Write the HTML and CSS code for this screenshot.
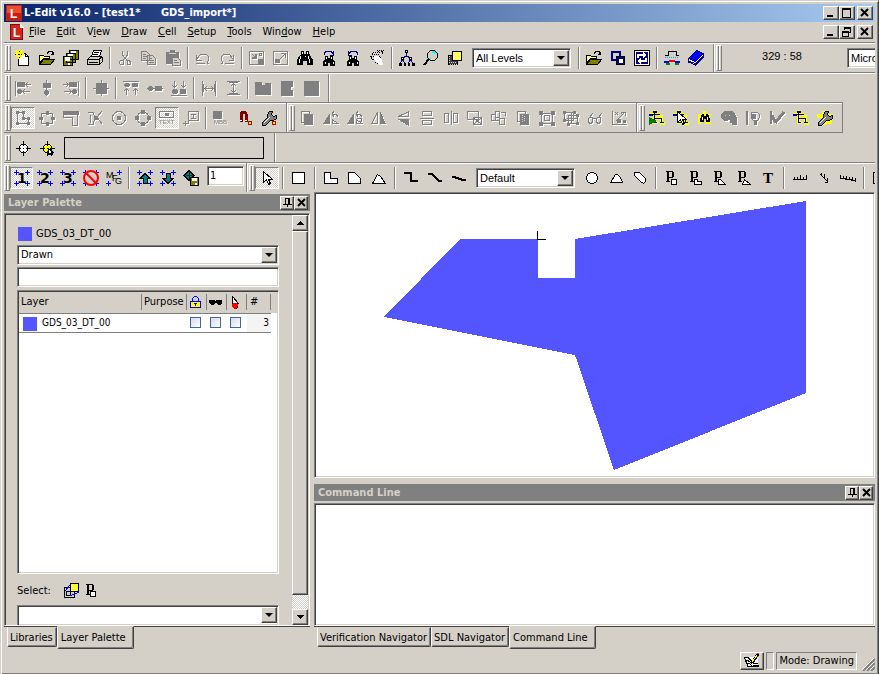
FILE: index.html
```html
<!DOCTYPE html>
<html lang="en">
<head>
    <meta charset="UTF-8">
    <meta name="viewport" content="width=device-width, initial-scale=1.0">
    <title>L-Edit v16.0</title>
    <link rel="stylesheet" href="styles.css">
</head>
<body>
    <!-- shapes used by more than one icon -->
    <svg class="sprite" aria-hidden="true">
        <symbol id="plus4" viewBox="0 0 16 16"><path stroke="#00f" d="M0 2.500h5M2.500 0v5M11 2.500h5M13.500 0v5M0 13.500h5M2.500 11v5M11 13.500h5M13.500 11v5"/></symbol>
        <symbol id="tree" viewBox="0 0 16 16"><path stroke="#ff0" stroke-width="3" d="M0 4.500h11M5.500 0v14M5 8.500h9M12.500 5v9M5 12.500h4M11 13.500h5"/><path stroke="#000080" stroke-width="2" d="M0 5h4M4 2h4"/><path stroke="#000080" d="M2 4.500h9M5.500 1v12M6 8.500h7M12.500 8v5M11 12.500h4M5 12.500h3"/></symbol>
        <symbol id="bino" viewBox="0 0 16 16"><path fill="#000" stroke="none" d="M4 1h3v3h2V1h3v3l1 1 3 5v5h-6v-4H6v4H0v-5l3-5 1-1z"/><path stroke="#fff" d="M5.500 2v2M10.500 2v2M3.500 6v3M2.500 9v4M11.500 6v3M12.500 9v4M8 6.500h1"/></symbol>
        <symbol id="minibino" viewBox="0 0 16 16"><path fill="#000" stroke="none" d="M4 6h3v2h2V6h3v3l2 3v4H9v-3H7v3H2v-4l2-3z"/><path stroke="#fff" d="M5.500 7v2M10.500 7v2M4.500 12v2M12.500 12v2"/></symbol>
        <symbol id="port" viewBox="0 0 16 16"><path d="M2 1.500h7M3.500 1v10M4.500 1v10M2 11.500h4M5 7.500h4M9.500 2v5M8.500 2v5"/></symbol>
        <symbol id="wrench" viewBox="0 0 16 16"><path stroke="#000" fill="#808080" d="M8.500 1.500h3l-1 3 2 2 3-1v3l-3 2h-3l-5 5h-3v-3l5-5v-3z"/><path stroke="#fff" d="M3 13l6-6"/></symbol>
        <symbol id="pointer" viewBox="0 0 16 16"><path fill="#fff" stroke="#000" d="M4.500 1.500v11l3-3 2 5 2-1-2-4h4z"/></symbol>
        <symbol id="target" viewBox="0 0 16 16"><path d="M8.500 1v5M8.500 11v5M1 8.500h5M11 8.500h5"/><path d="M6.500 4.500h4l2 2v4l-2 2h-4l-2-2v-4z"/><path d="M8 8.500h1"/></symbol>
        <symbol id="floppy" viewBox="0 0 16 16"><path fill="#808000" stroke="#000" d="M7.500 7.500h8v8h-8z"/><path fill="#fff" stroke="none" d="M9 8h5v3H9zM12 13h2v2h-2z"/></symbol>
        <symbol id="folder" viewBox="0 0 16 16"><path stroke="#000" fill="#ff8" d="M.5 13.500v-8h4l1 1h5v2h-6z"/><path stroke="#000" fill="#808000" d="M.5 14.500l4-5h11l-4 5z"/><path stroke="#000" d="M8 3.500l2-2h3l1 2M12 4.500h3M14.500 2v2"/></symbol>
    </svg>

    <div class="window">
        <header class="titlebar">
            <svg class="logo" viewBox="0 0 16 16"><rect width="16" height="16" fill="#c81e14" stroke="none"/><rect x="1" y="1" width="14" height="7" fill="#e85030" stroke="none"/><text x="4" y="13" class="logo-letter">L</text></svg>
            <h1>L-Edit v16.0 - [test1* &nbsp; &nbsp;  GDS_import*]</h1>
            <div class="caption-buttons">
                <button class="cap" aria-label="Minimize"><svg viewBox="0 0 12 10"><path stroke-width="2" d="M2 8h6"/></svg></button>
                <button class="cap" aria-label="Maximize"><svg viewBox="0 0 12 10"><path d="M1.500 1v8.500h8V.5M1 1h9"/><path d="M1 .5h9"/></svg></button>
                <button class="cap close" aria-label="Close"><svg viewBox="0 0 12 10"><path class="smooth" d="M2 1l7 7M9 1L2 8"/></svg></button>
            </div>
        </header>

        <nav class="menubar">
            <svg class="doc-logo" viewBox="0 0 14 16"><path fill="#d8231c" stroke="#701010" d="M.5.5h9l3 3v12H.5z"/><path fill="#fff" stroke="none" d="M10 0v4h4z"/><text x="3" y="13" class="logo-letter">L</text></svg>
            <a href="#"><u>F</u>ile</a>
            <a href="#"><u>E</u>dit</a>
            <a href="#">V<u>i</u>ew</a>
            <a href="#"><u>D</u>raw</a>
            <a href="#"><u>C</u>ell</a>
            <a href="#"><u>S</u>etup</a>
            <a href="#"><u>T</u>ools</a>
            <a href="#">Win<u>d</u>ow</a>
            <a href="#"><u>H</u>elp</a>
            <div class="caption-buttons">
                <button class="cap" aria-label="Minimize document"><svg viewBox="0 0 12 10"><path stroke-width="2" d="M2 8h6"/></svg></button>
                <button class="cap" aria-label="Restore document"><svg viewBox="0 0 12 10"><path d="M3.500 3V.5h6v5H8M3 1.500h7M1.500 4.500h6v5h-6zM1 5.500h7"/></svg></button>
                <button class="cap close" aria-label="Close document"><svg viewBox="0 0 12 10"><path class="smooth" d="M2 1l7 7M9 1L2 8"/></svg></button>
            </div>
        </nav>

        <!-- standard -->
        <div class="row row-standard">
            <div class="band">
                <button class="tool" aria-label="New"><svg viewBox="0 0 16 16"><path fill="#fff" stroke="#000" d="M3.500 3.500h7l3 3v9h-10z"/><path d="M10.500 3v3.500h3"/><path stroke="#ff0" stroke-width="2" d="M4 0v9M0 4h9M1 1l6 6M7 1L1 7"/><path stroke="#000" stroke-dasharray="1 2" d="M4.500 1v8M0 4.500h8"/></svg></button>
                <button class="tool" aria-label="Open"><svg viewBox="0 0 16 16"><use href="#folder"/></svg></button>
                <button class="tool" aria-label="Save all"><svg viewBox="0 0 16 16"><path fill="#808000" stroke="#000" d="M6.500.5h9v9h-9zM3.500 3.500h9v9h-9zM.5 6.500h9v9h-9z"/><path fill="#fff" stroke="none" d="M8 1h5v2H8zM5 4h5v2H5zM2 7h5v4H2zM5 13h2v2H5z"/></svg></button>
                <button class="tool" aria-label="Print"><svg viewBox="0 0 16 16"><path fill="#fff" stroke="#000" d="M4.500 6.500l2-6h8l-2 6z"/><path fill="#d4d0c8" stroke="#000" d="M.5 9.500l3-3h11l1 1v4l-3 3h-12z"/><path d="M0 9.500h12l3-3M12.500 9v6M2 12.500h9M7 2.500h5M6 4.500h5"/><path stroke="#e0e000" d="M9 11.500h2"/></svg></button>
                <i class="sep"></i>
                <button class="tool off" aria-label="Cut"><svg viewBox="0 0 16 16"><path d="M5.500 1v4l5 6M10.500 1v4l-5 6M4 10.500h2v4H3.500l-1-1v-2zM10 10.500h2l1 1v3h-3z"/></svg></button>
                <button class="tool off" aria-label="Copy"><svg viewBox="0 0 16 16"><path d="M.5 1.500h5l3 3v6h-8zM6.500 5.500h5l3 3v6h-8z" fill="#d4d0c8"/><path d="M2 4.500h3M2 6.500h4M2 8.500h3M8 8.500h3M8 10.500h5M8 12.500h5"/></svg></button>
                <button class="tool off" aria-label="Paste"><svg viewBox="0 0 16 16"><path class="f" d="M1 2h4V0h5v2h4v12H1z"/><path fill="#d4d0c8" d="M7.500 7.500h5l3 3v5h-8z"/><path stroke="#d4d0c8" d="M4 3.500h7"/><path d="M9 10.500h3M9 12.500h5"/></svg></button>
                <i class="sep"></i>
                <button class="tool off" aria-label="Undo"><svg viewBox="0 0 16 16"><path d="M1.500 5v5h5M2 9l3-4 2-1h4l2 2 1 3-2 4M1 13.500h9M12 13.500h2"/></svg></button>
                <button class="tool off" aria-label="Redo"><svg viewBox="0 0 16 16"><path d="M14.500 5v5h-5M14 9l-3-4-2-1H5L3 6 2 9l2 4M6 13.500h9M2 13.500h2"/></svg></button>
                <i class="sep"></i>
                <button class="tool off" aria-label="Push into cell"><svg viewBox="0 0 16 16"><path d="M.5 1.500h14v13H.5zM3 4l4 4M10.500 3.500h2v2h-2z"/><path class="f" d="M8 4v5H3v-2h2l1-1V4zM9 9h5v5H9z"/></svg></button>
                <button class="tool off" aria-label="Pop out of cell"><svg viewBox="0 0 16 16"><path d="M.5 1.500h14v13H.5zM7 9l5-5M8 3.500h4.500V8"/><path class="f" d="M2 9h5v4H2z"/></svg></button>
                <button class="tool" aria-label="Find"><svg viewBox="0 0 16 16"><use href="#bino"/></svg></button>
                <button class="tool" aria-label="Find next"><svg viewBox="0 0 16 16"><use href="#minibino"/><path stroke="#000080" d="M3.500 5V3l2-2h4l3 3M12.500 1v4H9"/></svg></button>
                <button class="tool" aria-label="Find previous"><svg viewBox="0 0 16 16"><use href="#minibino"/><path stroke="#000080" d="M12.500 5V3l-2-2h-4l-3 3M3.500 1v4H7"/></svg></button>
                <button class="tool" aria-label="Go to"><svg viewBox="0 0 16 16"><path stroke="#000" stroke-dasharray="1 1" d="M1.500 5.500l3-3h4l2 4 3 5M1 6l5 6 3 2M3 4.500h5M2 6.500h5"/><path fill="#fff" stroke="none" d="M5 6h4l4 4 1 5h-3L5 10z"/><path d="M8 0l3 3M11 0L8 3M12 0l1 2 2-2M13.500 2v2"/></svg></button>
                <i class="sep"></i>
                <button class="tool" aria-label="Hierarchy"><svg viewBox="0 0 16 16"><path stroke="#000080" d="M7.500 3v3l-4 2v3M7.500 6l4 2v3M3 10l-2 4M4 10l2 4M11 10l-2 4M12 10l2 4"/><path fill="#fff" stroke="#000" d="M6.500.5h2v2h-2zM2.500 7.500h2v2h-2zM10.500 7.500h2v2h-2z"/><path class="f" d="M0 13h3v3H0zM5 13h2v3H5zM9 13h2v3H9zM13 13h3v3h-3z"/></svg></button>
                <button class="tool" aria-label="Zoom"><svg viewBox="0 0 16 16"><path fill="#d4d0c8" stroke="#000" d="M7.500.5h4l3 3v4l-3 3h-4l-3-3v-4z"/><path stroke="#0ff" stroke-width="2" d="M9 2h2l2 2M7 9h1"/><path stroke="#000" stroke-width="2" d="M6 9l-5 6"/></svg></button>
                <button class="tool" aria-label="Layers"><svg viewBox="0 0 16 16"><path fill="#404040" stroke="#000" d="M1.500 5.500h9v9h-9z"/><path stroke="#d4d0c8" stroke-dasharray="1 1" d="M2 12.500h8M3 14.500h8M2.500 6v8"/><path fill="#ff6" stroke="#000" d="M5.500 1.500h9v9h-9z"/></svg></button>
                <span class="combo combo-tool"><select aria-label="Hierarchy levels"><option>All Levels</option></select></span>
                <i class="sep"></i>
                <button class="tool" aria-label="Open design"><svg viewBox="0 0 16 16"><use href="#folder"/></svg></button>
                <button class="tool" aria-label="Copy cell"><svg viewBox="0 0 16 16"><path fill="#d4d0c8" stroke="#000080" stroke-width="2" d="M2 2h8v8H2z"/><path fill="#000080" stroke="#000" d="M6.500 6.500h8v8h-8z"/><path fill="#fff" stroke="none" d="M9 9h4v4H9z"/></svg></button>
                <button class="tool" aria-label="Refresh"><svg viewBox="0 0 16 16"><path fill="#fff" stroke="#000" d="M.5.5h15v15H.5z"/><path fill="#000080" stroke="none" d="M2 2h12v12H2z"/><path stroke="#fff" stroke-width="2" d="M4 8V5h6M12 8v3H6"/><path fill="#fff" stroke="none" d="M9 2l4 3-4 3zM7 8v6l-4-3z"/></svg></button>
                <i class="sep"></i>
                <button class="tool" aria-label="Cross section"><svg viewBox="0 0 16 16"><path stroke="#000" d="M1 5.500h3v-4h8v4h3"/><path stroke="#0af" stroke-dasharray="1 1" d="M1 7.500h14"/><path stroke="#00f" stroke-width="2" d="M0 12h5M11 12h5"/><path stroke="#f00" stroke-width="2" d="M5 11h6"/><path stroke="#080" stroke-width="2" d="M2 14h4M11 14h4"/></svg></button>
                <button class="tool" aria-label="Help"><svg viewBox="0 0 16 16"><path fill="#fff" stroke="#000080" d="M.5 9v3l7 3 8-8V4.500z"/><path fill="#00f" stroke="#000080" d="M.5 8.500l8-8 7 3-8 8z"/><path stroke="#000080" d="M1 11.500l7 2 7-7"/></svg></button>
            </div>
            <div class="band band-open">
                <output class="coords">329 : 58</output>
                <span class="combo combo-units"><select aria-label="Units"><option>Microns</option></select></span>
            </div>
        </div>

        <!-- alignment -->
        <div class="row row-align">
            <div class="band">
                <button class="tool off" aria-label="Align left"><svg viewBox="0 0 16 16"><path d="M.5 1v15M11 4.500h5M8 11.500h7M13 2l-2 2.500 2 2.500M10 9l-2 2.500 2 2.500"/><path class="f" d="M2 2h8v5H2zM3 9h3v5H3zM2 10h5v3H2z"/></svg></button>
                <button class="tool off" aria-label="Align center"><svg viewBox="0 0 16 16"><path d="M7.500 0v16"/><path class="f" d="M4 3h8v5H4zM6 10h3v5H6zM5 11h5v3H5z"/></svg></button>
                <button class="tool off" aria-label="Align right"><svg viewBox="0 0 16 16"><path d="M15.500 1v15M0 4.500h5M1 11.500h7M3 2l2 2.500L3 7M6 9l2 2.500L6 14"/><path class="f" d="M6 2h8v5H6zM10 9h3v5h-3zM9 10h5v3H9z"/></svg></button>
                <i class="sep"></i>
                <button class="tool off" aria-label="Center both"><svg viewBox="0 0 16 16"><path d="M8.500 0v16M0 8.500h16"/><path class="f" d="M3 3h11v11H3z"/></svg></button>
                <i class="sep"></i>
                <button class="tool off" aria-label="Align top"><svg viewBox="0 0 16 16"><path d="M0 1.500h16M3.500 9v6M12.500 9v6M1 11l2.500-2L6 11M10 11l2.500-2 2.500 2"/><path class="f" d="M2 3h4v4H2zM1 4h6v2H1zM9 3h6v4H9z"/></svg></button>
                <button class="tool off" aria-label="Align middle"><svg viewBox="0 0 16 16"><path d="M0 8.500h16"/><path class="f" d="M2 6h3v5H2zM1 7h5v3H1zM8 6h7v5H8z"/></svg></button>
                <button class="tool off" aria-label="Align bottom"><svg viewBox="0 0 16 16"><path d="M0 15.500h16M3.500 1v6M12.500 1v6M1 5l2.500 2L6 5M10 5l2.500 2L15 5"/><path class="f" d="M2 9h4v5H2zM1 10h6v3H1zM9 9h6v5H9z"/></svg></button>
                <i class="sep"></i>
                <button class="tool off" aria-label="Space horizontally"><svg viewBox="0 0 16 16"><path d="M1.500 1v15M14.500 1v15M4 8.500h9M6 6L4 8.500 6 11M10 6l2 2.500-2 2.500"/><path class="f" d="M1 4h2v8H1zM13 4h2v8h-2z"/></svg></button>
                <button class="tool off" aria-label="Space vertically"><svg viewBox="0 0 16 16"><path d="M2 1.500h13M2 14.500h13M8.500 4v8M6 6l2.500-2L11 6M6 10l2.500 2 2.500-2"/><path class="f" d="M4 1h9v2H4zM4 13h9v2H4z"/></svg></button>
                <i class="sep"></i>
                <button class="tool off" aria-label="Merge"><svg viewBox="0 0 16 16"><path class="f" d="M0 2h7v3h3V3h6v12H0z"/></svg></button>
                <button class="tool off" aria-label="Notch"><svg viewBox="0 0 16 16"><path class="f" d="M2 1h12v6h-2v3h2v6H2z"/></svg></button>
                <button class="tool off" aria-label="Fill"><svg viewBox="0 0 16 16"><path class="f" d="M1 1h15v15H1z"/></svg></button>
            </div>
        </div>

        <!-- snapping, editing, tracing -->
        <div class="row row-edit">
            <div class="band">
                <button class="tool off pressed" aria-label="Snap to vertex"><svg viewBox="0 0 16 16"><path d="M2.500 2.500v11h11v-5h-5v-6z"/><path class="f" d="M1 1h3v3H1zM7 1h3v3H7zM1 12h3v3H1zM12 12h3v3h-3zM12 7h3v3h-3zM7 7h3v3H7z"/></svg></button>
                <button class="tool off" aria-label="Snap to edge"><svg viewBox="0 0 16 16"><path d="M2.500 3.500h11v10h-11z"/><path class="f" d="M7 1h3v4H7zM7 12h3v4H7zM0 7h4v3H0zM12 7h4v3h-4z"/></svg></button>
                <button class="tool off" aria-label="Snap to corner"><svg viewBox="0 0 16 16"><path class="f" d="M0 1h16v4H0z"/><path d="M.5 1v6h9v8.500h5V1"/></svg></button>
                <button class="tool off" aria-label="Snap to intersection"><svg viewBox="0 0 16 16"><path d="M1 2.500h5l2 5-2 7H1M15 1l-5 6 5 7M3 5v8"/><path class="f" d="M7 6h4v4H7z"/></svg></button>
                <button class="tool off" aria-label="Snap to center"><svg viewBox="0 0 16 16"><circle cx="8" cy="8" r="6.500"/><path class="f" d="M6 6h4v4H6z"/></svg></button>
                <button class="tool off" aria-label="Snap to quadrant"><svg viewBox="0 0 16 16"><circle cx="8" cy="8" r="6"/><path class="f" d="M6 0h4v4H6zM6 12h4v4H6zM0 6h4v4H0zM12 6h4v4h-4z"/></svg></button>
                <button class="tool off pressed" aria-label="Snap to text"><svg viewBox="0 0 16 16"><path d="M.5 1.500h14v6H.5z"/><path class="f" d="M6 3h4v3H6z"/><text x="0" y="14" class="tiny">TEXT</text></svg></button>
                <button class="tool off" aria-label="Snap to instance"><svg viewBox="0 0 16 16"><path d="M5.500 1.500h10v9h-10zM8 4.500h5M10.500 4v5M8 8.500h5M0 13.500h6M2.500 11v5M5 8v6"/></svg></button>
                <i class="sep"></i>
                <button class="tool off" aria-label="Bounding box"><svg viewBox="0 0 16 16"><path class="f" d="M0 1h9v8H0z"/><text x="1" y="14" class="tiny">MBB</text></svg></button>
                <button class="tool" aria-label="Magnet"><svg viewBox="0 0 16 16"><path stroke="#800000" stroke-width="3" d="M4 12V4l2-2h2l1 2v8"/><path stroke="#fff" d="M3 10.500h2M8 10.500h2"/><circle fill="#ff0" stroke="#c00000" cx="13" cy="13" r="2"/></svg></button>
                <button class="tool" aria-label="Snap setup"><svg viewBox="0 0 16 16"><use href="#wrench"/><circle fill="#ff0" stroke="#c00000" cx="13" cy="13" r="2"/></svg></button>
            </div>
            <div class="band">
                <button class="tool off" aria-label="Duplicate"><svg viewBox="0 0 16 16"><path d="M2.500 1.500h8v11h-8z"/><path class="f" d="M5 4h9v11H5z"/></svg></button>
                <button class="tool off" aria-label="Rotate"><svg viewBox="0 0 16 16"><path class="f" d="M7 3v11H0z"/><path d="M9 13.500h6l-6-4zM9 4h4l2 3M11 1L9 4l2 3"/></svg></button>
                <button class="tool off" aria-label="Rotate by angle"><svg viewBox="0 0 16 16"><path class="f" d="M7 3v11H0z"/><path d="M9 13.500h6l-6-4zM9 4h4l2 3M11 1L9 4l2 3M10 8.500h4v3h-3"/></svg></button>
                <button class="tool off" aria-label="Flip horizontal"><svg viewBox="0 0 16 16"><path d="M6.500 2v11.500H1z"/><path class="f" d="M9 1v13h6z"/></svg></button>
                <button class="tool off" aria-label="Flip vertical"><svg viewBox="0 0 16 16"><path d="M13.500 2v4.500H3z"/><path class="f" d="M14 9v7L2 9z"/></svg></button>
                <button class="tool off" aria-label="Slice horizontal"><svg viewBox="0 0 16 16"><path d="M3.500 1.500h9v4h-9zM3.500 10.500h9v4h-9zM1 8.500h14"/></svg></button>
                <button class="tool off" aria-label="Slice vertical"><svg viewBox="0 0 16 16"><path d="M1.500 3.500h4v9h-4zM10.500 3.500h4v9h-4zM8.500 1v14"/></svg></button>
                <button class="tool off" aria-label="Subtract"><svg viewBox="0 0 16 16"><path d="M.5 1.500h11v8H.5zM6.500 7.500h8v7h-8zM7 8l7 6M14 8l-7 6"/></svg></button>
                <button class="tool off" aria-label="Nibble"><svg viewBox="0 0 16 16"><path d="M.5 4.500h4v6h-4zM4.500 1.500h4v6h-4zM8.500 8.500h5v6h-5zM10 2h4v4M5 10h3"/></svg></button>
                <button class="tool off" aria-label="Intersect"><svg viewBox="0 0 16 16"><path d="M2.500 1.500h8v10h-8z"/><path class="f" d="M5 4h9v11H5z"/><path stroke="#d4d0c8" stroke-dasharray="1 1" d="M7.500 5v7M9.500 6v6"/></svg></button>
                <button class="tool off" aria-label="Group"><svg viewBox="0 0 16 16"><path d="M2.500 3.500h11v10h-11zM5.500 5.500h5v5h-5z"/><path class="f" d="M0 1h4v4H0zM12 1h4v4h-4zM0 12h4v4H0zM12 12h4v4h-4z"/></svg></button>
                <button class="tool off" aria-label="Ungroup"><svg viewBox="0 0 16 16"><path d="M1.500 2.500h9v8h-9zM5.500 5.500h9v8h-9zM8.500 3v10M4 8.500h10"/><path class="f" d="M0 1h3v3H0zM10 1h3v3h-3zM0 9h3v3H0zM4 13h3v3H4zM13 12h3v3h-3zM13 4h3v3h-3z"/></svg></button>
                <button class="tool off" aria-label="View only"><svg viewBox="0 0 16 16"><path d="M1.500 8.500l1-1h3v4l-1 2h-2l-1-2zM9.500 8.500l1-1h3v4l-1 2h-2l-1-2zM6 8.500h3M3 7l3-4M12 7l3-4"/></svg></button>
                <button class="tool off" aria-label="Measure"><svg viewBox="0 0 16 16"><path d="M1.500 1v13.500H16M5 11l8-8M4 2l3 3M7 2L4 5M10 4V2.500h4V6"/><path class="f" d="M6 9h4v4H6zM12 10h3v3h-3z"/></svg></button>
            </div>
            <div class="band">
                <button class="tool" aria-label="Run trace"><svg viewBox="0 0 16 16"><use href="#tree"/><path fill="#008000" stroke="none" d="M0 7l8 4-8 4z"/></svg></button>
                <button class="tool" aria-label="Pick node"><svg viewBox="0 0 16 16"><use href="#tree"/><use href="#pointer"/></svg></button>
                <button class="tool" aria-label="Find node"><svg viewBox="0 0 16 16"><path stroke="#ff0" stroke-width="3" d="M1 5.500h13M7.500 1v4M2.500 6v8M14 12H8"/><path fill="#000" stroke="none" d="M5 4h2v2h2V4h2l2 5v3H9V9H7v3H3V9z"/><path stroke="#fff" d="M5.500 7v3M10.500 7v3"/></svg></button>
                <button class="tool off" aria-label="Mark node"><svg viewBox="0 0 16 16"><path class="f" d="M3 1h8l3 3 2 4v7h-5v-2H9v-3H7v1H3L0 8V4z"/><path stroke="#d4d0c8" d="M4 5.500h1M8 5.500h1"/></svg></button>
                <button class="tool off" aria-label="Highlight node"><svg viewBox="0 0 16 16"><path stroke-width="2" d="M2 1v14"/><path d="M6.500 2.500h6l2 2v3l-2 3h-4l-2-2z"/><path class="f" d="M6 4h5v5H6zM9 10h3v5H9z"/></svg></button>
                <button class="tool off" aria-label="Erase marks"><svg viewBox="0 0 16 16"><path stroke-width="2" d="M2 1v13"/><path stroke-width="3" d="M3 5l3 7M6 13l9-11"/></svg></button>
                <button class="tool" aria-label="Show connections"><svg viewBox="0 0 16 16"><use href="#tree"/></svg></button>
                <button class="tool" aria-label="Trace setup"><svg viewBox="0 0 16 16"><path stroke="#ff0" stroke-width="4" d="M0 6h16M7 1v14M4 12h11"/><use href="#wrench"/></svg></button>
            </div>
        </div>

        <!-- base point -->
        <div class="row row-base">
            <div class="band">
                <button class="tool" aria-label="Base point"><svg viewBox="0 0 16 16"><path fill="#fff" stroke="none" d="M6 4h5l2 2v5l-2 2H6l-2-2V6z"/><use href="#target"/></svg></button>
                <button class="tool" aria-label="Pick base point"><svg viewBox="0 0 16 16"><path fill="#ff0" stroke="none" d="M6 4h5l2 2v5l-2 2H6l-2-2V6z"/><use href="#target"/><path fill="#fff" stroke="#000" d="M9.500 8.500v6l2-1 1 2 1-1-1-2h2z"/></svg></button>
                <input class="base-input" type="text" aria-label="Base point value">
            </div>
        </div>

        <!-- grids and drawing -->
        <div class="row row-draw">
            <div class="band narrow">
                <button class="tool pressed" aria-label="Grid 1"><svg viewBox="0 0 16 16"><use href="#plus4"/><text x="3" y="13" class="digit">1</text></svg></button>
                <button class="tool" aria-label="Grid 2"><svg viewBox="0 0 16 16"><use href="#plus4"/><text x="3" y="13" class="digit">2</text></svg></button>
                <button class="tool" aria-label="Grid 3"><svg viewBox="0 0 16 16"><use href="#plus4"/><text x="3" y="13" class="digit">3</text></svg></button>
                <button class="tool" aria-label="No grid"><svg viewBox="0 0 16 16"><use href="#plus4"/><g class="smooth"><circle cx="8" cy="8" r="7" stroke="#f00" stroke-width="2"/><path stroke="#f00" stroke-width="2" d="M3 3l10 10"/></g></svg></button>
                <button class="tool" aria-label="Manufacturing grid"><svg viewBox="0 0 16 16"><path stroke="#00f" d="M11 2.500h5M13.500 0v5M0 13.500h5M2.500 11v5"/><text x="0" y="8" class="mfg">M</text><text x="6" y="11" class="mfg">F</text><text x="9" y="14" class="mfg">G</text></svg></button>
                <i class="sep wide"></i>
                <button class="tool" aria-label="Grid up"><svg viewBox="0 0 16 16"><use href="#plus4"/><path fill="#008080" stroke="#000" d="M8 3.500l5 5h-3v5H6v-5H3z"/></svg></button>
                <button class="tool" aria-label="Grid down"><svg viewBox="0 0 16 16"><use href="#plus4"/><path fill="#008080" stroke="#000" d="M8 13.500l5-5h-3v-5H6v5H3z"/></svg></button>
                <button class="tool" aria-label="Save grid"><svg viewBox="0 0 16 16"><path fill="#008080" stroke="#000" d="M6 .5l5 5-5 5-5-5z"/><path stroke="#0a3030" d="M6.500 2v7M3 5.500h7"/><use href="#floppy"/></svg></button>
                <input class="grid-input" type="text" value="1" aria-label="Grid multiple">
            </div>
            <div class="band band-open">
                <button class="tool pressed" aria-label="Select"><svg viewBox="0 0 16 16"><use href="#pointer"/></svg></button>
                <i class="sep wide"></i>
                <button class="tool" aria-label="Box"><svg viewBox="0 0 16 16"><path fill="#fff" d="M1.500 2.500h12v11h-12z"/></svg></button>
                <i class="sep wide"></i>
                <button class="tool" aria-label="90 degree polygon"><svg viewBox="0 0 16 16"><path fill="#fff" d="M1.500 2.500h6v6h7v5h-13z"/></svg></button>
                <button class="tool" aria-label="45 degree polygon"><svg viewBox="0 0 16 16"><path fill="#fff" d="M1.500 2.500h6l6 6v5h-12z"/></svg></button>
                <button class="tool" aria-label="Polygon"><svg viewBox="0 0 16 16"><path fill="#fff" d="M1.500 13.500l5-9 3 2 5 7z"/></svg></button>
                <i class="sep wide"></i>
                <button class="tool" aria-label="90 degree wire"><svg viewBox="0 0 16 16"><path stroke-width="2" d="M1 3h7v8h7"/></svg></button>
                <button class="tool" aria-label="45 degree wire"><svg viewBox="0 0 16 16"><path stroke-width="2" d="M1 4h4l7 7h3"/></svg></button>
                <button class="tool" aria-label="Wire"><svg viewBox="0 0 16 16"><path stroke-width="2" d="M1 7h4M4 8h4M7 9h4M10 10h5"/></svg></button>
                <span class="combo combo-tool"><select aria-label="Wire style"><option>Default</option></select></span>
                <button class="tool" aria-label="Circle"><svg viewBox="0 0 16 16"><circle fill="#fff" cx="8" cy="8" r="5.500"/></svg></button>
                <button class="tool" aria-label="Pie wedge"><svg viewBox="0 0 16 16"><path fill="#fff" d="M2.500 12.500l5-8h2l3 3 2 5z"/></svg></button>
                <button class="tool" aria-label="Torus"><svg viewBox="0 0 16 16"><path fill="#fff" d="M2.500 2.500h5l6 6v3l-2 2-3-2-6-6z"/></svg></button>
                <i class="sep wide"></i>
                <button class="tool" aria-label="Port box"><svg viewBox="0 0 16 16"><use href="#port"/><path fill="#fff" d="M7.500 9.500h5v5h-5z"/></svg></button>
                <button class="tool" aria-label="Port polygon"><svg viewBox="0 0 16 16"><use href="#port"/><path fill="#fff" d="M6.500 9.500h3v2h4v3h-7z"/></svg></button>
                <button class="tool" aria-label="Port 45 polygon"><svg viewBox="0 0 16 16"><use href="#port"/><path fill="#fff" d="M6.500 9.500h2l5 5h-7z"/></svg></button>
                <button class="tool" aria-label="Port any polygon"><svg viewBox="0 0 16 16"><use href="#port"/><path fill="#fff" d="M6.500 14.500l2-5 6 5z"/></svg></button>
                <button class="tool" aria-label="Text"><svg viewBox="0 0 16 16"><text x="3" y="13" class="serif">T</text></svg></button>
                <i class="sep wide"></i>
                <button class="tool" aria-label="Horizontal ruler"><svg viewBox="0 0 16 16"><path d="M1 9.500h14M2.500 7v3M5.500 7v3M8.500 5v4M11.500 7v3M14.500 5v4"/></svg></button>
                <button class="tool" aria-label="45 ruler"><svg viewBox="0 0 16 16"><path d="M4 4l8 8M5.500 3v3M8.500 4v4M11.500 8v4M8.500 12h3"/></svg></button>
                <button class="tool" aria-label="Ruler"><svg viewBox="0 0 16 16"><path d="M0 8.500h5v1h6v1h5M.5 5v4M3.500 6v3M6.500 6v4M9.500 7v3M12.500 7v4M15.500 8v4"/></svg></button>
                <i class="sep wide"></i>
                <button class="tool" aria-label="Instance"><svg viewBox="0 0 16 16"><path d="M1.500 2.500h13v11h-13z"/></svg></button>
            </div>
        </div>

        <main class="workspace">
            <section class="dock dock-left">
                <div class="dock-title">
                    <h2>Layer Palette</h2>
                    <button class="pin" aria-label="Pin layer palette"><svg viewBox="0 0 9 9"><path d="M2.500 6V.5h4V6M5.500 1v5M0 6.500h9M4.500 6v3"/></svg></button>
                    <button class="pin" aria-label="Close layer palette"><svg viewBox="0 0 9 9"><path class="smooth" d="M1 1l7 7M8 1L1 8"/></svg></button>
                </div>
                <div class="palette">
                    <div class="palette-body">
                        <div class="current-layer"><i class="swatch"></i>GDS_03_DT_00</div>
                        <span class="combo"><select aria-label="Layer filter"><option>Drawn</option></select></span>
                        <input class="filter" type="text" aria-label="Layer name filter">
                        <div class="layer-list">
                            <table>
                                <thead>
                                    <tr>
                                        <th class="col-layer">Layer</th>
                                        <th class="col-purpose">Purpose</th>
                                        <th class="col-flag"><svg viewBox="0 0 13 13" aria-label="Locked"><path stroke="#00f" d="M3.500 6V2.500l2-2h2l2 2V6"/><path fill="#ff0" stroke="#00f" d="M1.500 5.500h10v6h-10z"/><path stroke="#00f" d="M5 7.500h3M6.500 7v3"/></svg></th>
                                        <th class="col-flag"><svg viewBox="0 0 13 13" aria-label="Hidden"><path fill="#000" stroke="none" d="M0 4h6v1h1V4h6v3l-1 2H9L7 7H6L5 9H2L0 7z"/></svg></th>
                                        <th class="col-flag"><svg viewBox="0 0 13 13" aria-label="Selectable"><path fill="#fff" stroke="#000" d="M3.500.5v9l2-2 2 5 1-1-1-4h2z"/><path fill="#f00" stroke="none" d="M4 7h4l1 2-1 3-3 1-2-2V9z"/></svg></th>
                                        <th class="col-count">#</th>
                                    </tr>
                                </thead>
                                <tbody>
                                    <tr>
                                        <td colspan="2" class="layer-name"><i class="swatch"></i>GDS_03_DT_00</td>
                                        <td class="flag"><input type="checkbox" aria-label="Lock layer"></td>
                                        <td class="flag"><input type="checkbox" aria-label="Hide layer"></td>
                                        <td class="flag"><input type="checkbox" aria-label="Protect layer"></td>
                                        <td class="count">3</td>
                                    </tr>
                                </tbody>
                            </table>
                        </div>
                        <div class="select-row">
                            <span>Select:</span>
                            <button class="plain" aria-label="Select objects on layer"><svg viewBox="0 0 16 16"><path fill="#d4d0c8" stroke="#000" d="M.5 4.500h10v10H.5zM2.500 8.500h4v4h-4z"/><path stroke="#00f" d="M1 8l5-6M6 13l9-4"/><path fill="#ff3" stroke="#000" d="M6.500.5h8v8h-8z"/></svg></button>
                            <button class="plain" aria-label="Select ports on layer"><svg viewBox="0 0 16 16"><use href="#port"/><path fill="#fff" d="M6.500 8.500h5v5h-5z"/></svg></button>
                        </div>
                        <span class="combo combo-last"><select aria-label="Selection filter"><option></option></select></span>
                    </div>
                    <div class="scrollbar">
                        <button class="scroll-btn" aria-label="Scroll up"><svg viewBox="0 0 7 4"><path class="f" d="M3 0h1l3 4H0z"/></svg></button>
                        <div class="thumb"></div>
                        <button class="scroll-btn" aria-label="Scroll down"><svg viewBox="0 0 7 4"><path class="f" d="M0 0h7L4 4H3z"/></svg></button>
                    </div>
                </div>
                <div class="tabs">
                    <button class="tab">Libraries</button>
                    <button class="tab active">Layer Palette</button>
                </div>
            </section>

            <section class="dock dock-right">
                <div class="canvas">
                    <svg viewBox="0 0 557 282" preserveAspectRatio="xMinYMin meet">
                        <polygon fill="#5555ff" stroke="none" points="68,123 144,45 222,45 222,84 259,84 259,45 490,7 490,199 298,276 259,161"/>
                        <path stroke="#000" d="M221.500 37v9M221 45.500h9"/>
                    </svg>
                </div>
                <div class="dock-title">
                    <h2>Command Line</h2>
                    <button class="pin" aria-label="Pin command line"><svg viewBox="0 0 9 9"><path d="M2.500 6V.5h4V6M5.500 1v5M0 6.500h9M4.500 6v3"/></svg></button>
                    <button class="pin" aria-label="Close command line"><svg viewBox="0 0 9 9"><path class="smooth" d="M1 1l7 7M8 1L1 8"/></svg></button>
                </div>
                <textarea class="command" aria-label="Command line"></textarea>
                <div class="tabs">
                    <button class="tab">Verification Navigator</button>
                    <button class="tab">SDL Navigator</button>
                    <button class="tab active">Command Line</button>
                </div>
            </section>
        </main>

        <footer class="statusbar">
            <button class="status-btn" aria-label="Edit mode"><svg viewBox="0 0 16 16"><path fill="#fff" stroke="none" d="M2 4h12v10H4z"/><path d="M0 4.500h4l5 5M1 7.500h3l4 3M2 10.500h3l3 2M3 13.500h12M9 12.500h6M9 10.500h5M0 4l4 9"/><path stroke="#000" stroke-width="3" d="M14 1L8 10"/><path stroke="#ff0" d="M13 2L8 9"/><path stroke="#f0f" d="M13 .5h2"/></svg></button>
            <span class="status-cell blank"></span>
            <span class="status-cell">Mode: Drawing</span>
            <svg class="resize" viewBox="0 0 13 13"><g class="smooth"><path stroke="#808080" stroke-width="2" d="M1 13L13 1M5 13l8-8M9 13l4-4"/><path stroke="#fff" d="M0 12L12 0M4 12l8-8M8 12l4-4"/></g></svg>
        </footer>
    </div>
</body>
</html>
```

FILE: styles.css
```css
*, *::before, *::after {
    box-sizing: border-box;
}
body {
    margin: 0;
    font-family: "DejaVu Sans Condensed", "Liberation Sans", sans-serif;
    font-size: 11px;
    line-height: 14px;
    color: #000;
    background-color: #d4d0c8;
}
button, input, select, textarea {
    margin: 0;
    padding: 0;
    border: none;
    border-radius: 0;
    font: inherit;
    color: inherit;
    background-color: transparent;
}
svg {
    display: block;
    fill: none;
    stroke: #000;
    shape-rendering: crispEdges;
}
.sprite {
    position: absolute;
    width: 0;
    height: 0;
}
.f {
    fill: currentColor;
    stroke: none;
}
.smooth {
    shape-rendering: auto;
}
.window {
    display: flex;
    flex-direction: column;
    min-height: 100vh;
    padding: 3px;
    border: 1px solid;
    border-color: #d4d0c8 #404040 #404040 #d4d0c8;
    box-shadow: inset 1px 1px #fff, inset -1px -1px #808080;
}

/* title and menu */
.titlebar {
    display: flex;
    align-items: center;
    height: 18px;
    padding: 0 2px;
    color: #fff;
    background: linear-gradient(to right, #0a246a, #a6caf0);
}
.titlebar h1 {
    flex: 1;
    margin: 0 0 0 2px;
    font-size: 11px;
    white-space: pre;
}
.logo {
    width: 16px;
    height: 16px;
}
.logo-letter {
    font: bold 12px "Liberation Sans", sans-serif;
    fill: #fff;
    stroke: none;
}
.caption-buttons {
    display: flex;
    margin-left: auto;
}
.cap, .pin, .scroll-btn, .thumb, .status-btn {
    background-color: #d4d0c8;
    border: 1px solid;
    border-color: #fff #404040 #404040 #fff;
    box-shadow: inset -1px -1px #808080;
}
.cap {
    width: 16px;
    height: 14px;
}
.cap svg {
    width: 12px;
    height: 10px;
    margin-left: 1px;
}
.cap.close {
    margin-left: 2px;
}
.cap .smooth, .pin .smooth {
    stroke-width: 2;
}
.menubar {
    display: flex;
    align-items: center;
    height: 21px;
    padding: 0 2px 0 6px;
    border-bottom: 1px solid #808080;
}
.menubar a {
    margin-left: 11px;
    color: #000;
    text-decoration: none;
}
.doc-logo {
    width: 14px;
    height: 16px;
}
.doc-logo + a {
    margin-left: 5px;
}

/* toolbars */
.row {
    display: flex;
    overflow: hidden;
}
.row-standard {
    height: 30px;
    border-top: 1px solid #fff;
    border-bottom: 1px solid #808080;
}
.row-align {
    height: 29px;
    border-top: 1px solid #fff;
}
.row-edit {
    align-self: flex-start;
    max-width: 100%;
    height: 31px;
    border-top: 1px solid #808080;
    border-bottom: 1px solid #808080;
    box-shadow: inset 0 1px #fff;
}
.row-base {
    height: 29px;
}
.row-draw {
    height: 30px;
    border-top: 1px solid #808080;
    box-shadow: inset 0 1px #fff;
}
.band {
    display: flex;
    flex: none;
    align-items: center;
    padding-right: 5px;
    border-right: 1px solid #808080;
    box-shadow: 1px 0 #fff;
}
.band + .band {
    padding-left: 1px;
}
.band-open {
    border-right: none;
}
.band::before {
    content: "";
    width: 6px;
    height: 26px;
    margin-left: 1px;
    border: 1px solid;
    border-color: #fff #808080 #808080 #fff;
    background: linear-gradient(to right, #d4d0c8 1px, #808080 1px, #808080 2px, #fff 2px, #fff 3px, #d4d0c8 3px);
}
.band.narrow::before {
    margin-left: 0;
}
.tool {
    display: flex;
    flex: none;
    align-items: center;
    justify-content: center;
    width: 24px;
    height: 22px;
}
.narrow .tool {
    width: 23px;
}
.tool svg, .plain svg {
    width: 16px;
    height: 16px;
    overflow: visible;
}
.tool.off {
    color: #808080;
}
.tool.off svg {
    stroke: #808080;
    filter: drop-shadow(1px 1px 0 #fff);
}
.tool.pressed {
    border: 1px solid;
    border-color: #808080 #fff #fff #808080;
    background: repeating-conic-gradient(#fff 0 25%, #d4d0c8 0 50%) 0 0 / 2px 2px;
}
.sep {
    flex: none;
    width: 2px;
    height: 22px;
    margin: 0 2px;
    border-left: 1px solid #808080;
    border-right: 1px solid #fff;
}
.sep.wide {
    margin: 0 3px;
}
.tiny {
    font: 6px "Liberation Sans", sans-serif;
    fill: currentColor;
    stroke: none;
}
.mfg {
    font: 9px "Liberation Sans", sans-serif;
    fill: #000;
    stroke: none;
}
.digit {
    font: bold 14px "DejaVu Sans", sans-serif;
    fill: #000;
    stroke: none;
}
.serif {
    font: bold 15px "Liberation Serif", serif;
    fill: #000;
    stroke: none;
}
.coords {
    width: 120px;
    margin-bottom: 4px;
    text-align: center;
    font: 11px "Liberation Sans", sans-serif;
}
.base-input {
    width: 200px;
    height: 22px;
    margin: 0 5px;
    border: 1px solid #000;
}
.grid-input {
    width: 37px;
    height: 20px;
    margin: 0 -3px 4px 5px;
    padding-left: 2px;
}

/* sunken fields */
.combo, .filter, .grid-input, .layer-list, .canvas, .command {
    background-color: #fff;
    border: 1px solid;
    border-color: #808080 #fff #fff #808080;
    box-shadow: inset 1px 1px #404040, inset -1px -1px #d4d0c8;
}
.combo {
    position: relative;
    display: block;
    flex: none;
    height: 20px;
}
.combo select {
    display: block;
    width: 100%;
    height: 18px;
    padding-left: 3px;
    appearance: none;
}
.combo::before {
    content: "";
    position: absolute;
    top: 1px;
    right: 1px;
    width: 16px;
    height: 16px;
    background-color: #d4d0c8;
    border: 1px solid;
    border-color: #fff #404040 #404040 #fff;
    box-shadow: inset -1px -1px #808080;
    pointer-events: none;
}
.combo::after {
    content: "";
    position: absolute;
    top: 7px;
    right: 5px;
    border: 4px solid transparent;
    border-top-color: #000;
    border-bottom: none;
    pointer-events: none;
}
.combo-tool {
    width: 99px;
    margin: 0 5px;
}
.combo-tool select, .combo-units select {
    font-family: "Liberation Sans", sans-serif;
}
.combo-units {
    width: 80px;
    margin-left: 5px;
}

/* docks */
.workspace {
    display: grid;
    flex: 1;
    grid-template-columns: 306px 1fr;
    gap: 4px;
}
.dock {
    display: flex;
    flex-direction: column;
    min-width: 0;
}
.dock-left {
    padding-top: 2px;
}
.dock-title {
    display: flex;
    align-items: center;
    height: 17px;
    padding: 0 2px 0 4px;
    color: #d4d0c8;
    background-color: #808080;
}
.dock-title h2 {
    flex: 1;
    margin: 0;
    font-size: 11px;
}
.pin {
    display: flex;
    align-items: center;
    justify-content: center;
    width: 14px;
    height: 14px;
}
.pin svg {
    width: 9px;
    height: 9px;
}
.palette {
    display: flex;
    flex: 1;
    margin-top: 2px;
    padding: 1px 0 0 1px;
    border: 1px solid;
    border-color: #808080 #fff #fff #808080;
    box-shadow: inset 1px 1px #404040, inset -1px -1px #d4d0c8;
}
.palette-body {
    display: flex;
    flex: 1;
    flex-direction: column;
    padding: 11px 13px 0 11px;
}
.current-layer {
    display: flex;
    align-items: center;
    gap: 4px;
    height: 14px;
    margin: 1px 0 4px 1px;
}
.swatch {
    width: 14px;
    height: 14px;
    background-color: #5555ff;
}
.filter {
    width: 100%;
    height: 20px;
    margin: 2px 0 3px;
    padding: 0 3px;
}
.layer-list {
    flex: 1;
    padding: 1px;
}
.layer-list table {
    width: 252px;
    border-collapse: collapse;
    table-layout: fixed;
}
.layer-list th {
    height: 21px;
    padding: 0 2px;
    text-align: left;
    font-weight: normal;
    background: linear-gradient(#808080, #808080) 100% 50% / 1px 16px no-repeat #d4d0c8;
    border-bottom: 1px solid #808080;
}
.layer-list thead {
    box-shadow: 7px 0 #d4d0c8;
}
.layer-list th svg {
    width: 13px;
    height: 13px;
    margin: 0 auto;
}
.col-layer {
    width: 123px;
}
.col-purpose {
    width: 45px;
}
.col-flag {
    width: 20px;
}
.layer-list .col-count {
    padding-left: 3px;
}
.layer-list td {
    height: 19px;
    padding: 0;
    font-size: 10px;
    border-bottom: 1px solid #808080;
}
.layer-list .col-flag, .layer-list .flag {
    padding: 0 3px 0 0;
}
.layer-name .swatch {
    display: inline-block;
    margin: 2px 5px 0 4px;
    vertical-align: middle;
}
.flag input {
    display: block;
    width: 11px;
    height: 11px;
    margin: 0 auto;
    appearance: none;
    border: 1px solid #3c6a9c;
    background: linear-gradient(135deg, #d8d8ec, #fff);
}
.layer-list .count {
    padding-right: 2px;
    text-align: right;
    background-color: #f4f4f4;
}
.select-row {
    display: flex;
    align-items: center;
    gap: 4px;
    height: 31px;
    padding-top: 2px;
}
.select-row span {
    margin-right: 9px;
}
.combo-last {
    border-bottom: none;
}
.scrollbar {
    display: flex;
    flex-direction: column;
    width: 16px;
    margin-right: 1px;
    background: repeating-conic-gradient(#fff 0 25%, #d4d0c8 0 50%) 0 0 / 2px 2px;
}
.scroll-btn {
    display: flex;
    align-items: center;
    justify-content: center;
    height: 16px;
}
.scroll-btn svg {
    width: 7px;
    height: 4px;
}
.thumb {
    flex: 1;
    margin-bottom: 14px;
}
.canvas {
    flex: 1;
    padding: 1px;
    overflow: hidden;
}
.canvas svg {
    width: 100%;
    max-height: 100%;
}
.dock-right .dock-title {
    margin-top: 6px;
}
.command {
    display: block;
    height: 123px;
    margin-top: 2px;
    padding: 2px 4px;
    resize: none;
    outline: none;
}
.tabs {
    display: flex;
    align-items: flex-start;
    height: 25px;
    padding-left: 3px;
    border-top: 1px solid #404040;
}
.tab {
    height: 20px;
    padding: 1px 3px 0 2px;
    border: 1px solid;
    border-color: transparent #404040 #404040 #fff;
    border-radius: 0 0 2px 2px;
    box-shadow: inset -1px -1px #808080;
}
.tab.active {
    height: 23px;
    margin-top: -1px;
    padding: 1px 7px 0 3px;
    border-top-color: #d4d0c8;
    background-color: #d4d0c8;
}

/* status */
.statusbar {
    display: flex;
    align-items: center;
    justify-content: flex-end;
    gap: 2px;
    height: 20px;
}
.status-btn {
    display: flex;
    justify-content: center;
    width: 24px;
    height: 18px;
}
.status-btn svg {
    width: 16px;
    height: 16px;
}
.status-cell {
    height: 18px;
    padding: 1px 2px 0;
    border: 1px solid;
    border-color: #808080 #fff #fff #808080;
}
.blank {
    width: 8px;
}
.resize {
    align-self: flex-end;
    width: 13px;
    height: 13px;
    margin-left: 3px;
}
```
